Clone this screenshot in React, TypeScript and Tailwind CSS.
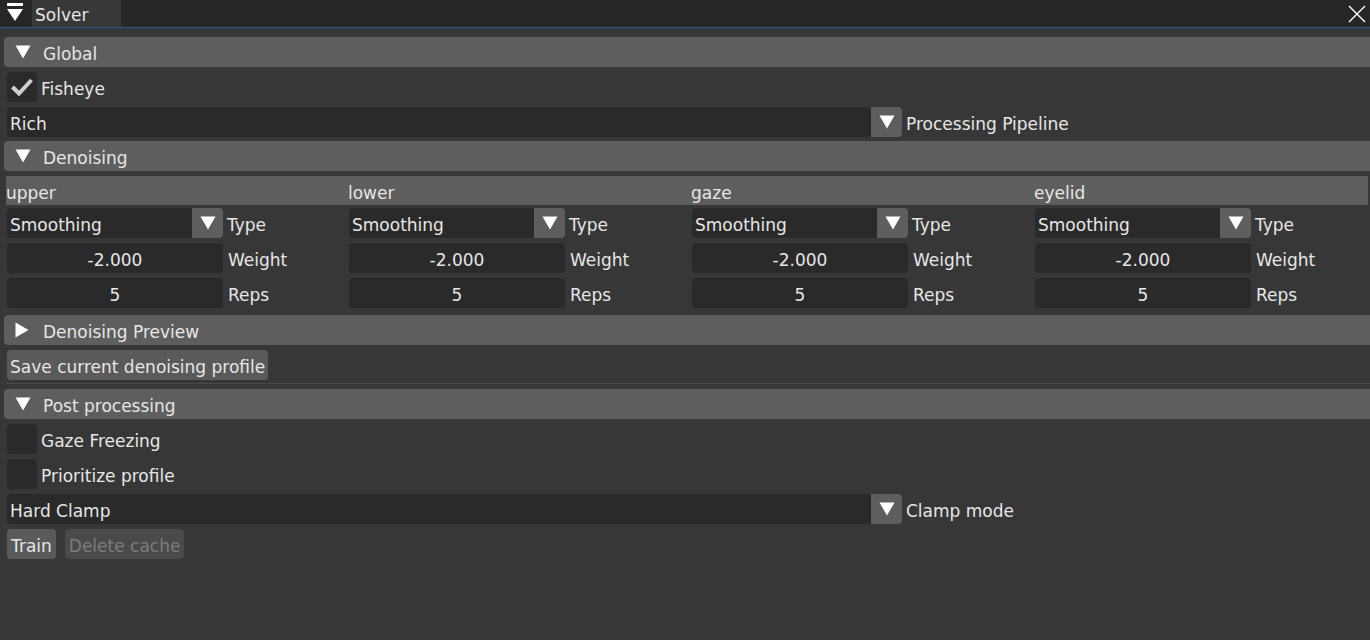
import React from "react";

const FONT = { fontFamily: '"DejaVu Sans", "Liberation Sans", sans-serif' };

function TriDown({ className = "" }: { className?: string }) {
  return (
    <svg width="16" height="14" viewBox="0 0 16 14" className={className}>
      <polygon points="0.5,0.5 15.5,0.5 8,13.5" fill="#ffffff" />
    </svg>
  );
}

function TriRight({ className = "" }: { className?: string }) {
  return (
    <svg width="14" height="16" viewBox="0 0 14 16" className={className}>
      <polygon points="0.5,0.5 13.5,8 0.5,15.5" fill="#ffffff" />
    </svg>
  );
}

function Header({ label, open = true, className = "" }: { label: string; open?: boolean; className?: string }) {
  return (
    <div className={`flex h-[30px] items-center rounded-l-[4px] bg-[#5e5e5e] pl-[11px] ${className}`}>
      <div className="flex w-[28px] items-center">{open ? <TriDown /> : <TriRight />}</div>
      <span className="pt-[6px]">{label}</span>
    </div>
  );
}

function Checkbox({ label, checked = false, className = "" }: { label: string; checked?: boolean; className?: string }) {
  return (
    <div className={`flex h-[30px] items-center ${className}`}>
      <div className="flex h-[30px] w-[30px] items-center justify-center rounded-[4px] bg-[#2a2a2a]">
        {checked && (
          <svg width="22" height="18" viewBox="0 0 22 18">
            <polyline points="1.5,9 8,15.5 20.5,2" fill="none" stroke="#cfcfcf" strokeWidth="4" strokeLinejoin="miter" />
          </svg>
        )}
      </div>
      <span className="ml-[4px] pt-[6px]">{label}</span>
    </div>
  );
}

function Combo({ value, label, width, className = "" }: { value: string; label: string; width: number; className?: string }) {
  return (
    <div className={`flex h-[30px] items-center ${className}`}>
      <div className="flex h-[30px] items-stretch overflow-hidden rounded-[4px] bg-[#2a2a2a]" style={{ width }}>
        <div className="flex flex-1 items-center pl-[3px] pt-[6px]">{value}</div>
        <div className="flex w-[31px] items-center justify-center bg-[#5e5e5e]">
          <TriDown />
        </div>
      </div>
      <span className="ml-[4px] pt-[6px]">{label}</span>
    </div>
  );
}

function Field({ value, label }: { value: string; label: string }) {
  return (
    <div className="flex h-[30px] items-center">
      <div className="flex h-[30px] w-[216px] items-center justify-center rounded-[4px] bg-[#2a2a2a] pt-[6px]">{value}</div>
      <span className="ml-[5px] pt-[6px]">{label}</span>
    </div>
  );
}

function Column() {
  return (
    <div className="flex flex-col gap-[5px] pl-[1px]">
      <Combo value="Smoothing" label="Type" width={216} />
      <Field value="-2.000" label="Weight" />
      <Field value="5" label="Reps" />
    </div>
  );
}

export default function App() {
  const cols = ["upper", "lower", "gaze", "eyelid"];
  return (
    <div className="h-[640px] w-[1370px] overflow-hidden bg-[#373737] text-[17px] text-[#e6e6e6]" style={FONT}>
      {/* title bar */}
      <div className="flex h-[27px] items-stretch bg-[#262626]">
        <div className="flex w-[32px] flex-col items-start pl-[7px] pt-[3px]">
          <div className="h-[3px] w-[16px] bg-white" />
          <svg width="16" height="12" viewBox="0 0 16 12" className="mt-[3px]">
            <polygon points="0,0 16,0 8,12" fill="#ffffff" />
          </svg>
        </div>
        <div className="flex w-[89px] items-center bg-[#383838] pl-[3px] pt-[4px]">Solver</div>
        <div className="flex-1" />
        <div className="flex w-[22px] items-center justify-start">
          <svg width="18" height="18" viewBox="0 0 18 18">
            <path d="M1 1 L17 17 M17 1 L1 17" stroke="#ffffff" strokeWidth="1.4" fill="none" />
          </svg>
        </div>
      </div>
      <div className="h-[1px] bg-[#235c8c]" />

      <div className="flex flex-col pl-[4px] pt-[9px]">
        <Header label="Global" />
        <div className="flex flex-col pl-[3px]">
          <Checkbox label="Fisheye" checked className="mt-[5px]" />
          <Combo value="Rich" label="Processing Pipeline" width={895} className="mt-[5px]" />
        </div>
        <Header label="Denoising" className="mt-[4px]" />
        <div className="mt-[5px] pl-[2px] pr-[2px]">
          <div className="grid h-[29px] grid-cols-[342px_343px_343px_1fr] items-center bg-[#5e5e5e]">
            {cols.map((c) => (
              <div key={c} className="pt-[5px]">{c}</div>
            ))}
          </div>
          <div className="mt-[3px] grid grid-cols-[342px_343px_343px_1fr]">
            {cols.map((c) => (
              <Column key={c} />
            ))}
          </div>
        </div>
        <Header label="Denoising Preview" open={false} className="mt-[7px]" />
        <div className="mt-[5px] pl-[3px]">
          <div className="inline-flex h-[30px] items-center rounded-[4px] bg-[#5a5a5a] px-[3px] pt-[6px]">Save current denoising profile</div>
        </div>
        <div className="ml-[2px] mt-[2px] h-[1px] bg-[#4a4a4a]" />
        <Header label="Post processing" className="mt-[5px]" />
        <div className="flex flex-col pl-[3px]">
          <Checkbox label="Gaze Freezing" className="mt-[5px]" />
          <Checkbox label="Prioritize profile" className="mt-[5px]" />
          <Combo value="Hard Clamp" label="Clamp mode" width={895} className="mt-[5px]" />
          <div className="mt-[5px] flex gap-[9px]">
            <div className="flex h-[30px] items-center rounded-[4px] bg-[#5a5a5a] px-[4px] pt-[6px]">Train</div>
            <div className="flex h-[30px] items-center rounded-[4px] bg-[#4a4a4a] px-[4px] pt-[6px] text-[#7c7c7c]">Delete cache</div>
          </div>
        </div>
      </div>
    </div>
  );
}
